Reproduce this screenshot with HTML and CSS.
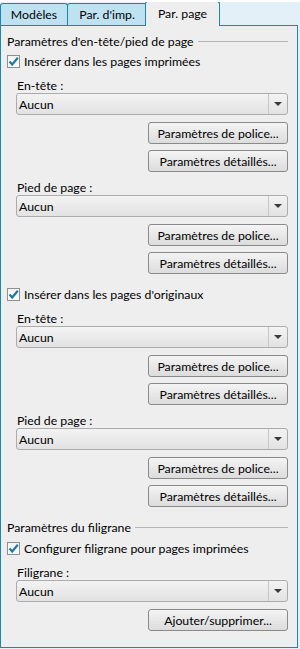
FILE: index.html
```html
<!DOCTYPE html>
<html lang="fr">
<head>
    <meta charset="UTF-8">
    <meta name="viewport" content="width=device-width, initial-scale=1.0">
    <title>Par. page</title>
    <link rel="stylesheet" href="styles.css">
</head>
<body>
    <div class="tabs">
        <div class="tab tab-first">Modèles</div>
        <div class="tab tab-second">Par. d'imp.</div>
        <div class="tab tab-active">Par. page</div>
    </div>

    <div class="panel">
        <div class="group-title"><span>Paramètres d'en-tête/pied de page</span></div>

        <label class="check-row">
            <span class="check"><svg width="11" height="11" viewBox="0 0 11 11"><path d="M1.5 5.5 L4.2 8.5 L9.8 1.8" fill="none" stroke="#1f7aa3" stroke-width="2.2"/></svg></span>
            Insérer dans les pages imprimées
        </label>

        <div class="field-label">En-tête :</div>
        <div class="select"><span class="select-value">Aucun</span><span class="select-arrow"></span></div>
        <div class="button-row"><button class="btn">Paramètres de police...</button></div>
        <div class="button-row tight"><button class="btn">Paramètres détaillés...</button></div>

        <div class="field-label after-btn">Pied de page :</div>
        <div class="select"><span class="select-value">Aucun</span><span class="select-arrow"></span></div>
        <div class="button-row"><button class="btn">Paramètres de police...</button></div>
        <div class="button-row tight"><button class="btn">Paramètres détaillés...</button></div>

        <label class="check-row spaced">
            <span class="check"><svg width="11" height="11" viewBox="0 0 11 11"><path d="M1.5 5.5 L4.2 8.5 L9.8 1.8" fill="none" stroke="#1f7aa3" stroke-width="2.2"/></svg></span>
            Insérer dans les pages d'originaux
        </label>

        <div class="field-label">En-tête :</div>
        <div class="select"><span class="select-value">Aucun</span><span class="select-arrow"></span></div>
        <div class="button-row"><button class="btn">Paramètres de police...</button></div>
        <div class="button-row tight"><button class="btn">Paramètres détaillés...</button></div>

        <div class="field-label after-btn">Pied de page :</div>
        <div class="select"><span class="select-value">Aucun</span><span class="select-arrow"></span></div>
        <div class="button-row"><button class="btn">Paramètres de police...</button></div>
        <div class="button-row tight"><button class="btn">Paramètres détaillés...</button></div>

        <div class="group-title spaced"><span>Paramètres du filigrane</span></div>

        <label class="check-row near">
            <span class="check"><svg width="11" height="11" viewBox="0 0 11 11"><path d="M1.5 5.5 L4.2 8.5 L9.8 1.8" fill="none" stroke="#1f7aa3" stroke-width="2.2"/></svg></span>
            Configurer filigrane pour pages imprimées
        </label>

        <div class="field-label">Filigrane :</div>
        <div class="select"><span class="select-value">Aucun</span><span class="select-arrow"></span></div>
        <div class="button-row"><button class="btn">Ajouter/supprimer...</button></div>
    </div>
</body>
</html>
```

FILE: styles.css
```css
body {
    margin: 0;
    background-color: #e4f0f8;
    font-family: "Segoe UI", Lato, "Noto Sans", sans-serif;
    font-size: 12.3px;
    color: #000000;
    width: 300px;
    border-top: 2px solid #ffffff;
}
.tabs {
    display: flex;
    align-items: flex-end;
    height: 23px;
    position: relative;
    z-index: 1;
}
.tab {
    box-sizing: border-box;
    height: 22px;
    border: 1px solid #1c87ae;
    border-bottom: none;
    border-radius: 3px 3px 0 0;
    background-color: #bfe2f2;
    line-height: 21px;
    text-align: center;
}
.tab-first {
    width: 68px;
}
.tab-second {
    width: 80px;
    margin-left: -1px;
}
.tab-active {
    width: 75px;
    height: 25px;
    margin-left: -2px;
    margin-bottom: -1px;
    line-height: 24px;
    background-color: #eeeeee;
    padding-bottom: 2px;
}
.panel {
    box-sizing: border-box;
    width: 298px;
    height: 623px;
    border: 1px solid #1c87ae;
    background-color: #eeeeee;
    padding: 8px 9px 0 6px;
}
.group-title {
    display: flex;
    align-items: center;
    line-height: 15px;
    height: 15px;
}
.group-title::after {
    content: "";
    flex: 1;
    height: 1px;
    background-color: #b4b4b4;
    margin-left: 4px;
}
.group-title.spaced {
    margin-top: 13px;
}
.check-row {
    display: flex;
    align-items: center;
    height: 15px;
    line-height: 15px;
    margin-top: 5px;
}
.check-row.spaced {
    margin-top: 13px;
}
.check-row.near {
    margin-top: 6px;
}
.check {
    box-sizing: border-box;
    width: 13px;
    height: 13px;
    border: 1px solid #8f8f8f;
    background: linear-gradient(#f4f4f4, #ffffff);
    margin-right: 4px;
    display: flex;
    align-items: center;
    justify-content: center;
}
.field-label {
    margin-top: 9px;
    padding-left: 10px;
    height: 15px;
    line-height: 15px;
}
.field-label.after-btn {
    margin-top: 8px;
}
.select {
    box-sizing: border-box;
    margin-left: 9px;
    height: 22px;
    border: 1px solid #acacac;
    border-radius: 3px;
    background: linear-gradient(#f3f3f3, #e2e2e2);
    display: flex;
    align-items: center;
}
.select-value {
    flex: 1;
    padding-left: 2px;
}
.select-arrow {
    width: 18px;
    height: 20px;
    border-left: 1px solid #c6c6c6;
    display: flex;
    align-items: center;
    justify-content: center;
}
.select-arrow::after {
    content: "";
    border-left: 4px solid transparent;
    border-right: 4px solid transparent;
    border-top: 4px solid #3a3a3a;
}
.button-row {
    display: flex;
    justify-content: flex-end;
    margin-top: 7px;
}
.button-row.tight {
    margin-top: 6px;
}
.btn {
    box-sizing: border-box;
    width: 140px;
    height: 22px;
    border: 1px solid #8a8a8a;
    border-radius: 3px;
    background: linear-gradient(#f4f4f4, #dcdcdc);
    font-family: inherit;
    font-size: 12.3px;
    color: #000000;
    padding: 0;
}
```
